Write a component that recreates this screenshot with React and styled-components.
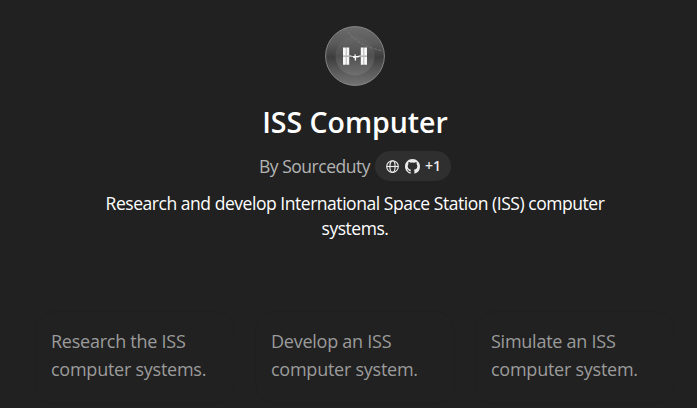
import React from 'react';
import styled, { createGlobalStyle } from 'styled-components';

const GlobalStyle = createGlobalStyle`
  * { box-sizing: border-box; }
  body {
    margin: 0;
    background: #212121;
    font-family: "Segoe UI", "Open Sans", sans-serif;
    overflow: hidden;
  }
`;

const Page = styled.main`
  height: 408px;
  overflow: hidden;
  background: #212121;
  color: #fff;
`;

const Hero = styled.header`
  display: flex;
  flex-direction: column;
  align-items: center;
  width: 640px;
  height: 311px;
  margin-left: 35px;
  padding-top: 26px;
`;

const Avatar = styled.svg`
  display: block;
  width: 60px;
  height: 60px;
`;

const Title = styled.h1`
  margin: 18px 0 0;
  font-size: 28.5px;
  line-height: 36px;
  font-weight: 600;
  letter-spacing: -0.03px;
  white-space: nowrap;
`;

const Byline = styled.div`
  display: flex;
  align-items: center;
  gap: 5px;
  height: 30px;
  margin-top: 11px;
`;

const Author = styled.span`
  color: #b4b4b4;
  font-size: 17.5px;
  letter-spacing: -0.48px;
  white-space: nowrap;
`;

const Links = styled.div`
  display: flex;
  align-items: center;
  width: 76px;
  height: 30px;
  padding-left: 11px;
  border-radius: 15px;
  background: #2f2f2f;
  color: #ececec;
`;

const LinkIcon = styled.svg`
  flex: none;
  width: ${(p) => p.$size}px;
  height: ${(p) => p.$size}px;
  margin-right: ${(p) => p.$gap}px;
`;

const More = styled.span`
  font-size: 14px;
  line-height: 20px;
  font-weight: 600;
  letter-spacing: 0;
`;

const Description = styled.p`
  width: 540px;
  margin: 10px 0 0;
  text-align: center;
  font-size: 17.5px;
  line-height: 25px;
  letter-spacing: -0.46px;
`;

const Cards = styled.section`
  display: grid;
  grid-template-columns: repeat(3, 200px);
  gap: 20px;
  margin-left: 35px;
`;

const Card = styled.button`
  height: 93px;
  padding: 15px;
  display: flex;
  align-items: flex-start;
  border: 1px solid #1f1f1f;
  border-radius: 20px;
  background: transparent;
  color: #9b9b9b;
  font-family: inherit;
  font-size: 18px;
  line-height: 28px;
  letter-spacing: -0.25px;
  text-align: left;
`;

const prompts = [
  'Research the ISS computer systems.',
  'Develop an ISS computer system.',
  'Simulate an ISS computer system.',
];

function StationAvatar() {
  return (
    <Avatar viewBox="0 0 60 60" aria-label="ISS Computer">
      <defs>
        <linearGradient id="disc" x1="0" y1="0" x2="0" y2="1">
          <stop offset="0" stopColor="#6b6b6b" />
          <stop offset="0.28" stopColor="#5b5b5b" />
          <stop offset="0.52" stopColor="#3d3d3d" />
          <stop offset="0.7" stopColor="#535353" />
          <stop offset="1" stopColor="#737373" />
        </linearGradient>
        <linearGradient id="core" x1="0" y1="0" x2="0" y2="1">
          <stop offset="0" stopColor="#676767" />
          <stop offset="0.5" stopColor="#505050" />
          <stop offset="1" stopColor="#707070" />
        </linearGradient>
      </defs>
      <circle cx="30" cy="30" r="29.4" fill="url(#disc)" stroke="#858585" strokeWidth="1" />
      <circle cx="30" cy="30" r="19.5" fill="url(#core)" />
      <path d="M20 2.5Q34 21 57 24.5" fill="none" stroke="#828282" strokeWidth="0.7" strokeDasharray="3 1.5" />
      <g fill="#f7f7f7">
        <path d="M18 21.5h2.9v8H18zM21.3 21.5h2.9v8h-2.9zM18 30.7h2.9v8H18zM21.3 30.7h2.9v8h-2.9zM35.8 21.5h2.9v8h-2.9zM39.1 21.5H42v8h-2.9zM35.8 30.7h2.9v8h-2.9zM39.1 30.7H42v8h-2.9z" />
        <path d="M18 29.6h7.5l2 .5h5l2-.5H42v1h-7l-2 .8h-1.9v3.2h-1.4v-2.7h-1.5v-1.2L25 30.6h-7z" />
        <path d="M29.5 28.2h1.2v2h-1.2z" />
      </g>
    </Avatar>
  );
}

export default function App() {
  return (
    <>
      <GlobalStyle />
      <Page>
        <Hero>
          <StationAvatar />
          <Title>ISS Computer</Title>
          <Byline>
            <Author>By Sourceduty</Author>
            <Links>
              <LinkIcon $size={13} $gap={6} viewBox="0 0 13 13" fill="none" stroke="currentColor" strokeWidth="1.15">
                <circle cx="6.5" cy="6.5" r="5.8" />
                <ellipse cx="6.5" cy="6.5" rx="2.6" ry="5.8" />
                <path d="M.8 6.5h11.4" />
              </LinkIcon>
              <LinkIcon $size={15} $gap={5} viewBox="0 0 16 16" fill="currentColor">
                <path d="M8 0C3.58 0 0 3.58 0 8c0 3.54 2.29 6.53 5.47 7.59.4.07.55-.17.55-.38 0-.19-.01-.82-.01-1.49-2.01.37-2.53-.49-2.69-.94-.09-.23-.48-.94-.82-1.13-.28-.15-.68-.52-.01-.53.63-.01 1.08.58 1.23.82.72 1.21 1.87.87 2.33.66.07-.52.28-.87.51-1.07-1.78-.2-3.64-.89-3.64-3.95 0-.87.31-1.59.82-2.15-.08-.2-.36-1.02.08-2.12 0 0 .67-.21 2.2.82a7.6 7.6 0 0 1 4 0c1.53-1.04 2.2-.82 2.2-.82.44 1.1.16 1.92.08 2.12.51.56.82 1.27.82 2.15 0 3.07-1.87 3.75-3.65 3.95.29.25.54.73.54 1.48 0 1.07-.01 1.93-.01 2.2 0 .21.15.46.55.38A8.01 8.01 0 0 0 16 8c0-4.42-3.58-8-8-8Z" />
              </LinkIcon>
              <More>+1</More>
            </Links>
          </Byline>
          <Description>
            Research and develop International Space Station (ISS) computer systems.
          </Description>
        </Hero>
        <Cards>
          {prompts.map((prompt) => (
            <Card key={prompt}>{prompt}</Card>
          ))}
        </Cards>
      </Page>
    </>
  );
}
